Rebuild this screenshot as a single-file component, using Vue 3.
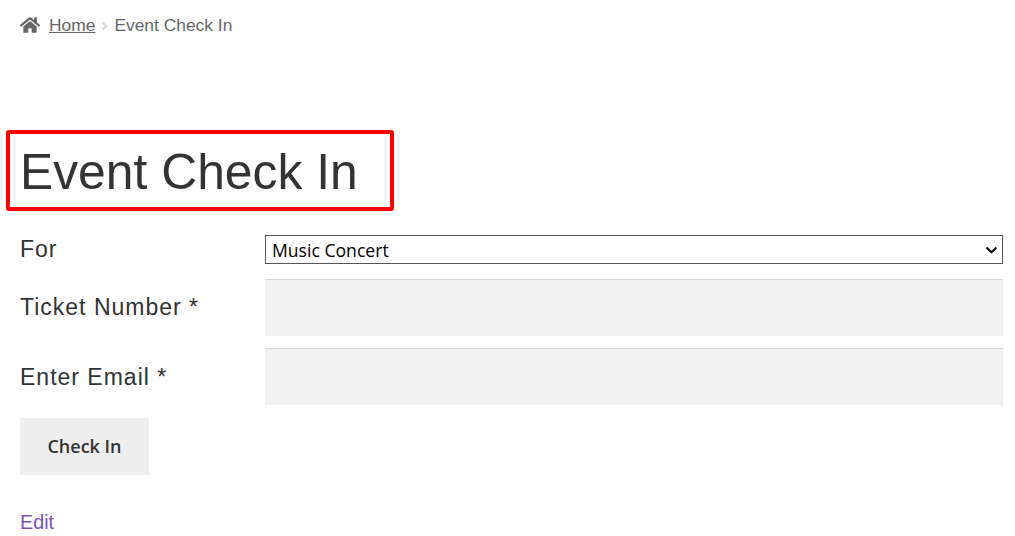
<script setup>
import { ref } from 'vue'

const event = ref('Music Concert')
</script>

<template>
  <div class="page">
    <nav class="crumbs">
      <svg class="home" viewBox="0 0 576 512" aria-hidden="true">
        <path d="M280.4 148.3 96 300.1V464a16 16 0 0 0 16 16l112-.3a16 16 0 0 0 15.9-16V368a16 16 0 0 1 16-16h64a16 16 0 0 1 16 16v95.6a16 16 0 0 0 16 16l112 .4a16 16 0 0 0 16-16V300L295.7 148.3a12.2 12.2 0 0 0-15.3 0zM571.6 251.5 488 182.6V44.1a12 12 0 0 0-12-12h-56a12 12 0 0 0-12 12v72.6L318.5 43a48 48 0 0 0-61 0L4.3 251.5a12 12 0 0 0-1.6 16.9l25.5 31A12 12 0 0 0 45.2 301l235.2-193.7a12.2 12.2 0 0 1 15.3 0L530.9 301a12 12 0 0 0 16.9-1.6l25.5-31a12 12 0 0 0-1.7-16.9z" />
      </svg>
      <a class="crumb-link" href="#">Home</a>
      <svg class="sep" viewBox="0 0 8 12" aria-hidden="true">
        <path d="M1.5 1.5 6 6l-4.5 4.5" />
      </svg>
      <span>Event Check In</span>
    </nav>

    <div class="title-wrap">
      <h1>Event Check In</h1>
      <div class="highlight"></div>
    </div>

    <form class="form" @submit.prevent>
      <div class="row row-select">
        <label for="evt">For</label>
        <div class="select-wrap">
          <select id="evt" v-model="event">
            <option>Music Concert</option>
          </select>
          <svg class="chevron" viewBox="0 0 12 8" aria-hidden="true">
            <path d="M1 1.5 6 6.2l5-4.7" />
          </svg>
        </div>
      </div>
      <div class="row">
        <label for="ticket">Ticket Number *</label>
        <input id="ticket" type="text" />
      </div>
      <div class="row">
        <label class="label-email" for="email">Enter Email *</label>
        <input id="email" type="text" />
      </div>
      <button type="submit">Check In</button>
    </form>

    <a class="edit" href="#">Edit</a>
  </div>
</template>

<style scoped>
.page {
  box-sizing: border-box;
  height: 536px;
  padding: 0 12px 0 20px;
  overflow: hidden;
  font-family: "Liberation Sans", Arial, sans-serif;
  background: #fff;
}

.crumbs {
  display: flex;
  align-items: center;
  height: 50px;
  font-size: 17.4px;
  color: #666;
}

.home {
  width: 20px;
  height: 18px;
  margin-right: 9px;
  fill: #666;
}

.crumb-link {
  color: #666;
}

.sep {
  width: 7px;
  height: 10px;
  margin: 1px 6px 0 6px;
  fill: none;
  stroke: #d4d4d4;
  stroke-width: 2.4;
}

.title-wrap {
  position: relative;
  margin-top: 90px;
}

h1 {
  margin: 0;
  font-size: 49.8px;
  font-weight: 400;
  line-height: 64px;
  color: #333;
}

.highlight {
  position: absolute;
  left: -14px;
  top: -10px;
  width: 380px;
  height: 73px;
  border: 4px solid #f00;
  border-radius: 3px;
}

.form {
  display: flex;
  flex-direction: column;
  align-items: flex-start;
  margin-top: 31px;
}

.row {
  display: flex;
  width: 100%;
  margin-bottom: 12px;
}

.row-select {
  margin-bottom: 15px;
}

label {
  flex: 0 0 245px;
  padding-top: 14px;
  font-size: 23px;
  line-height: 28px;
  letter-spacing: 1px;
  color: #333;
}

.row-select label {
  padding-top: 0;
}

.label-email {
  padding-top: 15px;
}

.select-wrap {
  position: relative;
  display: flex;
  flex: 1;
}

select {
  flex: 1;
  height: 29px;
  padding: 0 6px;
  border: 1px solid #555;
  border-radius: 0;
  background: #fff;
  appearance: none;
  font-family: "Open Sans", sans-serif;
  font-size: 17.6px;
  color: #000;
}

.chevron {
  position: absolute;
  top: 11px;
  right: 5px;
  width: 13px;
  height: 8px;
  fill: none;
  stroke: #111;
  stroke-width: 2.2;
  pointer-events: none;
}

input {
  flex: 1;
  box-sizing: border-box;
  height: 57px;
  border: 0;
  background: #f2f2f2;
  box-shadow: inset 0 1px 1px rgba(0, 0, 0, 0.125);
}

button {
  width: 129px;
  height: 57px;
  margin-top: 1px;
  padding: 0 0 2px;
  border: 0;
  background: #eee;
  font-family: "Open Sans", sans-serif;
  font-size: 18px;
  font-weight: 600;
  color: #333;
}

.edit {
  display: block;
  width: fit-content;
  margin-top: 34px;
  font-size: 19.8px;
  line-height: 26px;
  color: #7f54b3;
  text-decoration: none;
}
</style>

<style>
body {
  background: #fff;
}
</style>
